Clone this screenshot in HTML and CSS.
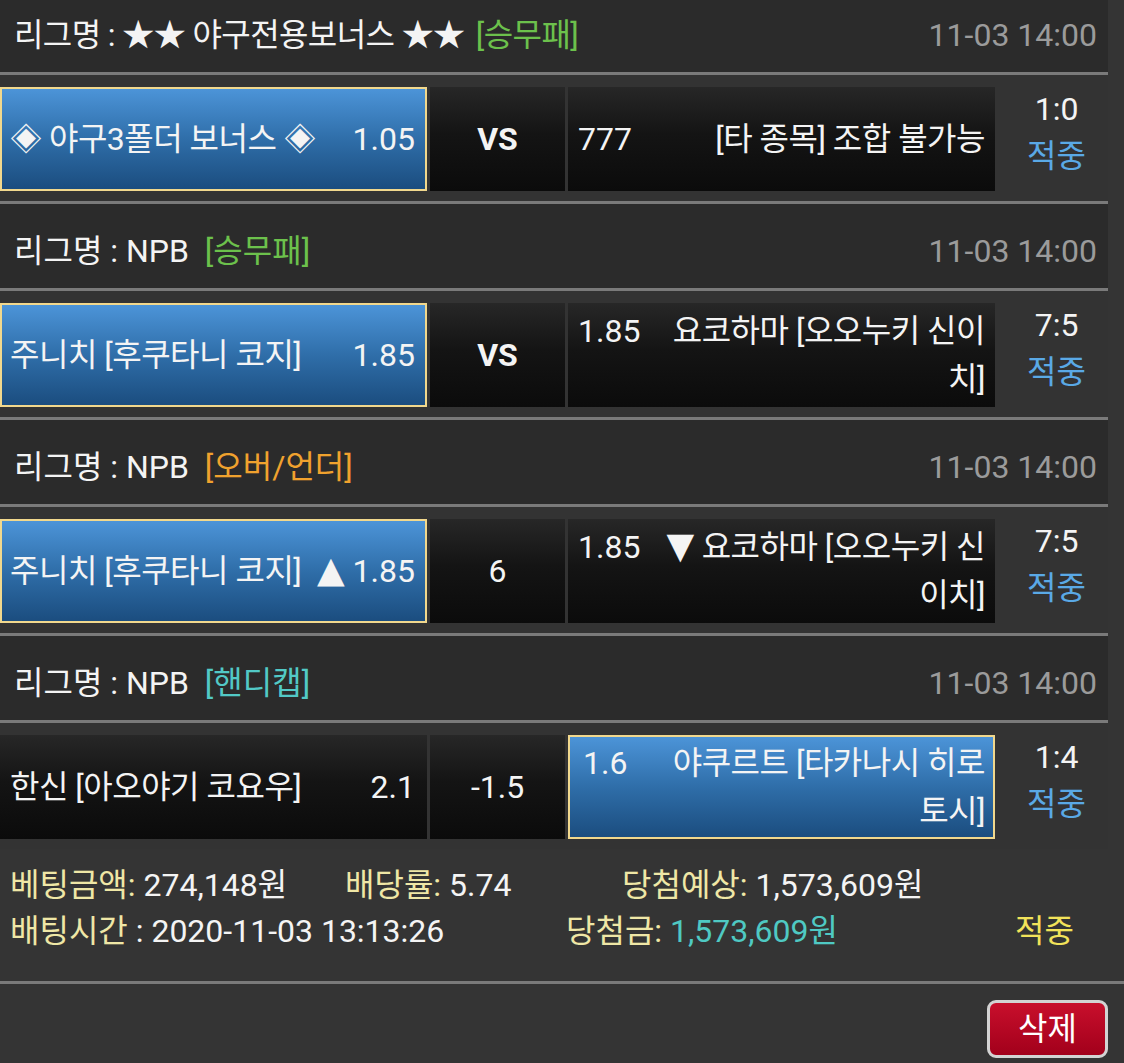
FILE: index.html
```html
<!DOCTYPE html>
<html lang="ko">
<head>
<meta charset="utf-8">
<title>베팅내역</title>
<link rel="stylesheet" href="styles.css">
</head>
<body>
<div class="bet">
  <div class="list">
    <section class="game">
      <div class="league"><span class="lname tight">리그명 : ★★ 야구전용보너스 ★★ <span class="type first">[승무패]</span></span><span class="time">11-03 14:00</span></div>
      <div class="match">
        <div class="cell home selected"><span class="name">◈ 야구3폴더 보너스 ◈</span><span class="odds">1.05</span></div>
        <div class="cell mid"><b>VS</b></div>
        <div class="cell away"><div class="away-in"><span class="odds">777</span><span class="name">[타 종목] 조합 불가능</span></div></div>
        <div class="score">1:0<br><span class="hit">적중</span></div>
      </div>
    </section>
    <section class="game">
      <div class="league"><span class="lname">리그명 : NPB <span class="type green">[승무패]</span></span><span class="time">11-03 14:00</span></div>
      <div class="match">
        <div class="cell home selected"><span class="name">주니치 [후쿠타니 코지]</span><span class="odds">1.85</span></div>
        <div class="cell mid"><b>VS</b></div>
        <div class="cell away"><div class="away-in"><span class="odds">1.85</span><span class="name">요코하마 [오오누키 신이<br>치]</span></div></div>
        <div class="score">7:5<br><span class="hit">적중</span></div>
      </div>
    </section>
    <section class="game">
      <div class="league"><span class="lname">리그명 : NPB <span class="type orange">[오버/언더]</span></span><span class="time">11-03 14:00</span></div>
      <div class="match">
        <div class="cell home selected"><span class="name">주니치 [후쿠타니 코지]</span><span class="odds"><span class="arrow">▲</span> 1.85</span></div>
        <div class="cell mid">6</div>
        <div class="cell away"><div class="away-in"><span class="odds">1.85</span><span class="name"><span class="arrow">▼</span> 요코하마 [오오누키 신<br>이치]</span></div></div>
        <div class="score">7:5<br><span class="hit">적중</span></div>
      </div>
    </section>
    <section class="game last">
      <div class="league"><span class="lname">리그명 : NPB <span class="type teal">[핸디캡]</span></span><span class="time">11-03 14:00</span></div>
      <div class="match">
        <div class="cell home"><span class="name">한신 [아오야기 코요우]</span><span class="odds">2.1</span></div>
        <div class="cell mid">-1.5</div>
        <div class="cell away selected"><div class="away-in"><span class="odds">1.6</span><span class="name">야쿠르트 [타카나시 히로<br>토시]</span></div></div>
        <div class="score">1:4<br><span class="hit">적중</span></div>
      </div>
    </section>
  </div>
  <div class="summary">
    <div class="sum-line">
      <span class="s1"><span class="lbl">베팅금액:</span> 274,148원</span>
      <span class="s2"><span class="lbl">배당률:</span> 5.74</span>
      <span><span class="lbl">당첨예상:</span> 1,573,609원</span>
    </div>
    <div class="sum-line">
      <span class="s3"><span class="lbl">배팅시간</span> : 2020-11-03 13:13:26</span>
      <span class="s4"><span class="lbl">당첨금:</span> <span class="won">1,573,609원</span></span>
      <span class="result">적중</span>
    </div>
  </div>
  <div class="actions"><button class="del">삭제</button></div>
</div>
</body>
</html>
```
FILE: styles.css
```css
html, body {
  margin: 0;
  padding: 0;
  background: #343434;
}
body {
  font-family: Roboto, "Noto Sans CJK KR", sans-serif;
  font-size: 32px;
  color: #f4f4f4;
  width: 1124px;
  height: 1063px;
  overflow: hidden;
}
.list {
  width: 1108px;
  margin-top: -12px;
}
.league {
  height: 87px;
  box-sizing: border-box;
  background: #2b2b2b;
  display: flex;
  justify-content: space-between;
  align-items: center;
  padding: 10px 11px 0 14px;
  border-bottom: 3px solid #7a7a7a;
  line-height: 48px;
  white-space: nowrap;
}
.tight { letter-spacing: -0.6px; }
.type { margin-left: 8px; }
.type.first { margin-left: 4px; color: #6cc14c; }
.green { color: #6cc14c; }
.orange { color: #f0a22e; }
.teal { color: #52c9c6; }
.time { color: #9b9b9b; }
.match {
  display: flex;
  padding: 12px 0 10px;
  border-bottom: 3px solid #7a7a7a;
  background: #333;
}
.game.last .match { border-bottom: none; }
.cell {
  height: 104px;
  box-sizing: border-box;
  background: linear-gradient(#272727 0%, #141414 45%, #0b0b0b 100%);
  display: flex;
  align-items: center;
  line-height: 48px;
  color: #f4f4f4;
}
.name { letter-spacing: -0.5px; }
.arrow {
  font-family: "DejaVu Sans", sans-serif;
  font-size: 36px;
  line-height: 40px;
  letter-spacing: 0;
}
.home {
  width: 427px;
  justify-content: space-between;
  padding: 0 12px 0 10px;
  white-space: nowrap;
}
.mid {
  width: 135px;
  margin-left: 3px;
  justify-content: center;
}
.mid b { font-weight: 700; }
.away {
  width: 427px;
  margin-left: 3px;
  padding: 0 10px;
  white-space: nowrap;
}
.away-in {
  width: 100%;
  text-align: right;
}
.away-in .odds {
  float: left;
}
.selected {
  background: linear-gradient(#4c94d8 0%, #2f6ea9 50%, #1b4d7f 100%);
  border: 2px solid #f1d88d;
}
.home.selected { padding: 0 10px 0 8px; }
.away.selected { padding: 0 8px 0 13px; }
.score {
  width: 113px;
  box-sizing: border-box;
  padding-left: 10px;
  margin-top: -1px;
  text-align: center;
  line-height: 47px;
}
.hit { color: #5aa9e6; }
.summary {
  padding: 13px 0 27px 10px;
  border-bottom: 3px solid #7a7a7a;
  line-height: 46px;
}
.sum-line {
  display: flex;
  white-space: nowrap;
}
.lbl { color: #efe7a6; }
.s1 { width: 335px; }
.s2 { width: 277px; }
.s3 { width: 556px; }
.s4 { width: 449px; }
.won { color: #4fc9c3; }
.result { color: #f2e35a; }
.actions {
  display: flex;
  justify-content: flex-end;
  padding: 16px 16px 0 0;
}
.del {
  width: 121px;
  height: 58px;
  border: 3px solid #d3d3d3;
  border-radius: 9px;
  background: linear-gradient(#c80f2c, #a2001b);
  color: #fff;
  font-family: Roboto, "Noto Sans CJK KR", sans-serif;
  font-size: 32px;
  line-height: 48px;
  padding: 0;
}
```
